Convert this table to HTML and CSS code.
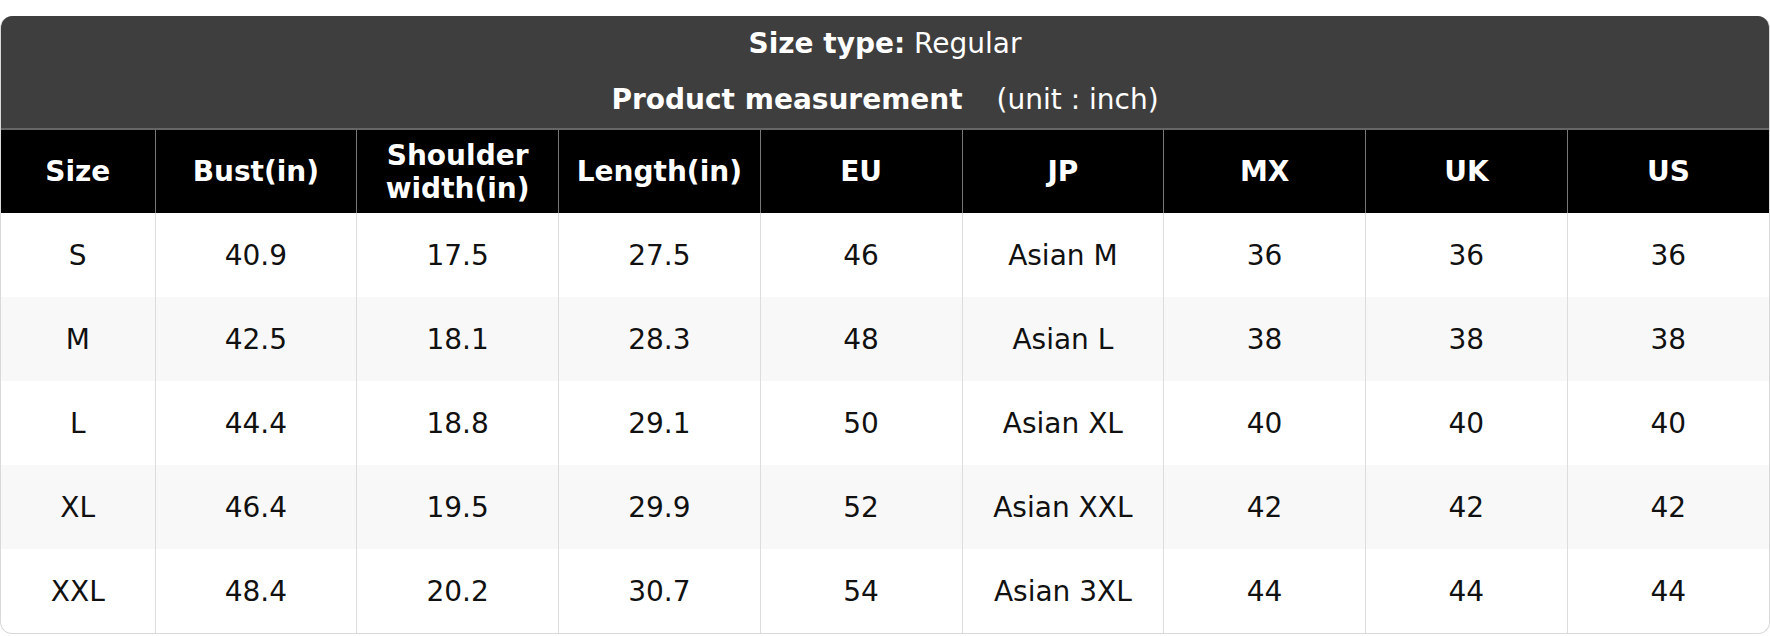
FILE: index.html
```html
<!DOCTYPE html>
<html lang="en">
<head>
<meta charset="utf-8">
<title>Size chart</title>
<link rel="stylesheet" href="styles.css">
</head>
<body>
<div class="chart">
  <div class="title">
    <div class="title-line"><b>Size type:</b> Regular</div>
    <div class="title-line"><b>Product measurement</b> <span class="unit">(unit : inch)</span></div>
  </div>
  <table class="grid">
    <colgroup>
      <col class="c-first">
      <col><col><col><col><col><col><col><col>
    </colgroup>
    <thead>
      <tr>
        <th>Size</th>
        <th>Bust(in)</th>
        <th>Shoulder<br>width(in)</th>
        <th>Length(in)</th>
        <th>EU</th>
        <th>JP</th>
        <th>MX</th>
        <th>UK</th>
        <th>US</th>
      </tr>
    </thead>
    <tbody>
      <tr><td>S</td><td>40.9</td><td>17.5</td><td>27.5</td><td>46</td><td>Asian M</td><td>36</td><td>36</td><td>36</td></tr>
      <tr><td>M</td><td>42.5</td><td>18.1</td><td>28.3</td><td>48</td><td>Asian L</td><td>38</td><td>38</td><td>38</td></tr>
      <tr><td>L</td><td>44.4</td><td>18.8</td><td>29.1</td><td>50</td><td>Asian XL</td><td>40</td><td>40</td><td>40</td></tr>
      <tr><td>XL</td><td>46.4</td><td>19.5</td><td>29.9</td><td>52</td><td>Asian XXL</td><td>42</td><td>42</td><td>42</td></tr>
      <tr><td>XXL</td><td>48.4</td><td>20.2</td><td>30.7</td><td>54</td><td>Asian 3XL</td><td>44</td><td>44</td><td>44</td></tr>
    </tbody>
  </table>
</div>
</body>
</html>
```

FILE: styles.css
```css
html, body {
  margin: 0;
  padding: 0;
  background: #ffffff;
}

body {
  padding-top: 16px;
  font-family: "DejaVu Sans", Verdana, sans-serif;
  font-size: 28px;
  color: #111111;
}

.chart {
  width: 1770px;
  box-sizing: border-box;
  border: 1px solid #d9d9d9;
  border-top: none;
  border-radius: 12px;
  overflow: hidden;
}

.title {
  background: #3e3e3e;
  color: #ffffff;
  text-align: center;
}

.title-line {
  height: 56px;
  line-height: 56px;
}

.title-line b {
  font-weight: bold;
}

.unit {
  margin-left: 25px;
}

.grid {
  width: 100%;
  border-collapse: collapse;
  table-layout: fixed;
}

.c-first {
  width: 154px;
}

.grid th {
  background: #000000;
  color: #ffffff;
  font-weight: bold;
  line-height: 33px;
  height: 83px;
  padding: 0;
  text-align: center;
  vertical-align: middle;
  border-top: 2px solid #666666;
  border-left: 1px solid #777777;
}

.grid td {
  height: 84px;
  padding: 0;
  text-align: center;
  vertical-align: middle;
  line-height: 33px;
  border-left: 1px solid #dddddd;
}

.grid th:first-child,
.grid td:first-child {
  border-left: none;
}

.grid tbody tr:nth-child(even) td {
  background: #f8f8f8;
}
```
